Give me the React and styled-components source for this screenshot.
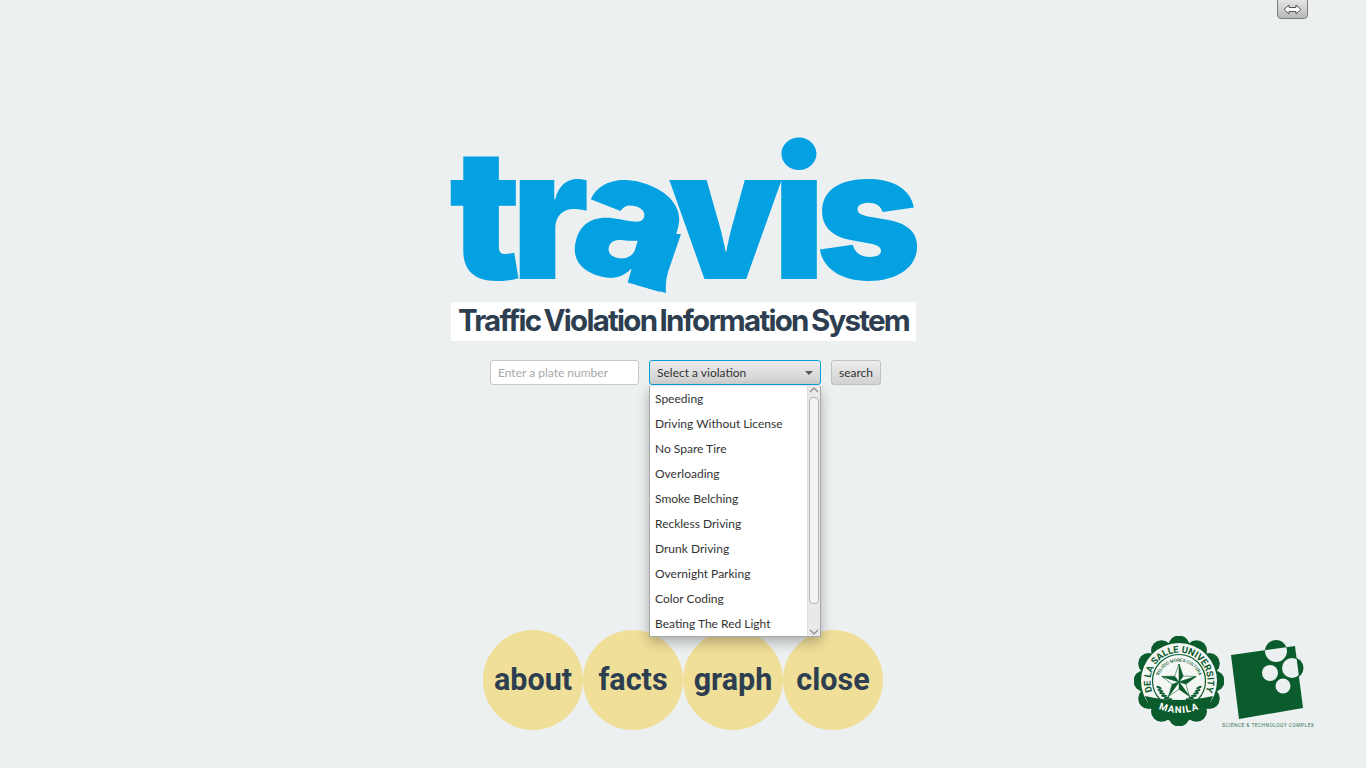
import React from "react";
import styled, { createGlobalStyle } from "styled-components";

const GlobalStyle = createGlobalStyle`
  html, body {
    margin: 0;
    padding: 0;
    height: 100%;
    overflow: hidden;
    background: #ecf0f1;
  }
`;

const Page = styled.div`
  width: 1366px;
  height: 768px;
  background: #ecf0f1;
  display: flex;
  flex-direction: column;
`;

const TopBar = styled.div`
  height: 20px;
  display: flex;
  justify-content: flex-end;
  padding-right: 58px;
`;

const ToggleButton = styled.button`
  width: 31px;
  height: 20px;
  margin-top: -1px;
  padding: 0;
  border: 1px solid #7d7d7d;
  border-radius: 0 0 4px 4px;
  background: linear-gradient(#e6e6e6, #b8b8b8);
  display: flex;
  align-items: center;
  justify-content: center;
`;

const Main = styled.main`
  flex: 1;
  display: flex;
  flex-direction: column;
  align-items: center;
  padding-top: 120px;
`;

const Brand = styled.div`
  width: 465px;
  margin-right: -1px;
  display: flex;
  flex-direction: column;
`;

const Logo = styled.h1`
  position: relative;
  height: 162px;
  margin: 0 0 0 -2px;
  color: #03a0e2;
  font: 900 181px/147px Inter, "Liberation Sans", sans-serif;
  letter-spacing: -10.5px;
  white-space: nowrap;
`;

const TiltedLetter = styled.span`
  display: inline-block;
  transform: rotate(16deg) translate(2px, 1px);
  margin-right: -8px;
`;

const Tail = styled.svg`
  position: absolute;
  left: 182px;
  top: 70px;
`;

const Tagline = styled.div`
  height: 39px;
  background: #ffffff;
  color: #2c3e50;
  font: 700 29.5px/36px Inter, "Liberation Sans", sans-serif;
  letter-spacing: -1.75px;
  word-spacing: -2px;
  text-align: center;
  white-space: nowrap;
`;

const SearchRow = styled.form`
  display: flex;
  align-items: flex-start;
  gap: 10px;
  margin: 19px 0 0 5px;
  font: 12px/25px Lato, "Open Sans", sans-serif;
`;

const PlateInput = styled.input`
  box-sizing: border-box;
  width: 149px;
  height: 25px;
  padding: 0 7px;
  border: 1px solid #c8c8c8;
  border-radius: 3px;
  background: #ffffff;
  font: inherit;
  outline: none;

  &::placeholder {
    color: #a9a9a9;
    opacity: 1;
  }
`;

const SelectWrap = styled.div`
  position: relative;
  width: 172px;
  z-index: 2;
`;

const SelectBox = styled.div`
  box-sizing: border-box;
  height: 25px;
  padding: 0 7px;
  border: 1px solid #0a9fd8;
  border-radius: 3px;
  background: linear-gradient(#ececec, #cfcfcf);
  color: #333333;
  line-height: 23px;
  display: flex;
  align-items: center;
  justify-content: space-between;
`;

const Caret = styled.span`
  width: 0;
  height: 0;
  border-left: 4px solid transparent;
  border-right: 4px solid transparent;
  border-top: 4px solid #555555;
`;

const SearchButton = styled.button`
  box-sizing: border-box;
  width: 50px;
  height: 25px;
  padding: 0;
  border: 1px solid #c0c0c0;
  border-radius: 3px;
  background: linear-gradient(#ececec, #d2d2d2);
  color: #333333;
  font: inherit;
  line-height: 23px;
`;

const Popup = styled.div`
  position: absolute;
  top: 26px;
  left: 0;
  box-sizing: border-box;
  width: 172px;
  height: 251px;
  display: flex;
  background: #ffffff;
  border: 1px solid #a8a8a8;
  border-top: none;
  box-shadow: 0 5px 12px rgba(0, 0, 0, 0.28);
`;

const OptionList = styled.ul`
  flex: 1;
  margin: 0;
  padding: 0;
  list-style: none;
`;

const Option = styled.li`
  height: 25px;
  padding-left: 5px;
  color: #333333;
  line-height: 25px;
  white-space: nowrap;
`;

const ScrollTrack = styled.div`
  box-sizing: border-box;
  flex: none;
  width: 13px;
  padding-left: 1px;
  background: #e9e9e9;
  border-left: 1px solid #dcdcdc;
  display: flex;
  flex-direction: column;
`;

const ScrollArrow = styled.svg`
  flex: none;
`;

const ScrollThumb = styled.div`
  box-sizing: border-box;
  width: 10px;
  height: 207px;
  margin-top: 3px;
  border: 1px solid #b5b5b5;
  border-radius: 4px;
  background: #f4f4f4;
`;

const ScrollSpacer = styled.div`
  flex: 1;
`;

const Footer = styled.div`
  display: grid;
  grid-template-columns: 1fr auto 1fr;
  align-items: end;
  width: 100%;
  margin-top: auto;
  padding-bottom: 38px;
`;

const CircleNav = styled.nav`
  grid-column: 2;
  display: flex;
`;

const CircleButton = styled.div`
  width: 100px;
  height: 100px;
  border-radius: 50%;
  background: #f0df99;
  color: #2c3e50;
  font: 700 30.5px/100px Roboto, "Liberation Sans", sans-serif;
  text-align: center;
`;

const Seals = styled.div`
  grid-column: 3;
  justify-self: end;
  display: flex;
  align-items: flex-start;
  margin-right: 52px;
`;

const SealSvg = styled.svg`
  display: block;
  margin: -4px -3px 0 0;
`;

const ComplexSvg = styled.svg`
  display: block;
`;

const violations = [
  "Speeding",
  "Driving Without License",
  "No Spare Tire",
  "Overloading",
  "Smoke Belching",
  "Reckless Driving",
  "Drunk Driving",
  "Overnight Parking",
  "Color Coding",
  "Beating The Red Light",
];

const GREEN = "#0b5c2d";
const PAPER = "#ecf0f1";

// star with every other facet left white
const star = () => {
  const outer = 18;
  const inner = 7.2;
  const pts = Array.from({ length: 10 }).map((_, i) => {
    const a = ((i * 36 - 90) * Math.PI) / 180;
    const r = i % 2 ? inner : outer;
    return [45 + r * Math.cos(a), 46 + r * Math.sin(a)];
  });
  return pts.map((p, i) => {
    const next = pts[(i + 1) % 10];
    return {
      key: i,
      d: `M45 46 L${p[0]} ${p[1]} L${next[0]} ${next[1]} Z`,
      fill: i % 2 ? "#ffffff" : GREEN,
    };
  });
};

const laurels = [-1, 1].flatMap((side) =>
  [0, 1, 2, 3, 4, 5].map((i) => {
    const deg = 108 + i * 9;
    const angle = (deg * Math.PI) / 180;
    const x = 45 + side * 21 * Math.sin(angle);
    const y = 45 - 21 * Math.cos(angle);
    return { key: `${side}-${i}`, x, y, rot: side * (deg + 45) };
  })
);

const Seal = () => (
  <SealSvg width="90" height="90" viewBox="0 0 90 90">
    <defs>
      <path id="sealTop" d="M24.8 65.2 A28.5 28.5 0 1 1 65.2 65.2" />
      <path id="sealBottom" d="M20 71 Q45 83 70 71" />
      <path id="sealInner" d="M25 55 A21.5 21.5 0 1 1 65 55" />
    </defs>
    {Array.from({ length: 12 }).map((_, i) => {
      const a = (i / 12) * Math.PI * 2;
      return (
        <circle key={i} cx={45 + 35 * Math.cos(a)} cy={45 + 35 * Math.sin(a)} r="10.5" fill={GREEN} />
      );
    })}
    <circle cx="45" cy="45" r="39" fill={GREEN} />
    <circle cx="45" cy="45" r="38" fill="#f4f6f4" />
    <circle cx="45" cy="45" r="26.5" fill="none" stroke={GREEN} strokeWidth="1.2" />
    <text fill={GREEN} fontFamily="Roboto, sans-serif" fontWeight="700" fontSize="9.4">
      <textPath href="#sealTop" startOffset="50%" textAnchor="middle">DE LA SALLE UNIVERSITY</textPath>
    </text>
    <path d="M11 60 Q45 68 79 60 L74 72 Q60 86 45 86 Q30 86 16 72 Z" fill={GREEN} />
    <text fill="#ffffff" fontFamily="Roboto, sans-serif" fontWeight="700" fontSize="9.6" letterSpacing="1">
      <textPath href="#sealBottom" startOffset="50%" textAnchor="middle">MANILA</textPath>
    </text>
    <text fill={GREEN} fontFamily="Roboto, sans-serif" fontWeight="500" fontSize="4.4">
      <textPath href="#sealInner" startOffset="50%" textAnchor="middle">RELIGIO MORES CULTURA</textPath>
    </text>
    {star().map((facet) => (
      <path key={facet.key} d={facet.d} fill={facet.fill} stroke={GREEN} strokeWidth="0.6" />
    ))}
    {laurels.map((leaf) => (
      <ellipse
        key={leaf.key}
        cx={leaf.x}
        cy={leaf.y}
        rx="3"
        ry="1.2"
        fill={GREEN}
        transform={`rotate(${leaf.rot} ${leaf.x} ${leaf.y})`}
      />
    ))}
  </SealSvg>
);

const SQUARE = "10,15 74,6 82,68 18,79";

const Complex = () => (
  <ComplexSvg width="93" height="90" viewBox="0 0 93 90">
    <defs>
      <clipPath id="squareClip">
        <polygon points={SQUARE} />
      </clipPath>
    </defs>
    <circle cx="55" cy="11" r="11" fill={GREEN} />
    <circle cx="72" cy="28" r="10.5" fill={GREEN} />
    <polygon points={SQUARE} fill={GREEN} />
    <g clipPath="url(#squareClip)" fill={PAPER}>
      <circle cx="55" cy="11" r="11" />
      <circle cx="71" cy="28" r="10" />
    </g>
    <circle cx="49" cy="33" r="8" fill={PAPER} />
    <circle cx="62" cy="46" r="7.5" fill={PAPER} />
    <text x="1" y="87" fill="#3c7a58" fontFamily="Roboto, sans-serif" fontSize="5" textLength="92">
      SCIENCE &amp; TECHNOLOGY COMPLEX
    </text>
  </ComplexSvg>
);

export default function App() {
  return (
    <Page>
      <GlobalStyle />
      <TopBar>
        <ToggleButton type="button" aria-label="toggle">
          <svg width="19" height="11" viewBox="0 0 19 11">
            <path
              d="M1 5.5 L6 1 V3.5 H13 V1 L18 5.5 L13 10 V7.5 H6 V10 Z"
              fill="#ffffff"
              stroke="#555555"
              strokeWidth="1"
            />
          </svg>
        </ToggleButton>
      </TopBar>
      <Main>
        <Brand>
          <Logo>
            tr<TiltedLetter>a</TiltedLetter>vis
            <Tail width="60" height="90" viewBox="0 0 60 90">
              <path d="M2 66 L6 75 L35 83 Q34 72 37 62 L50 24 L16 24 L14 52 Z" fill="#03a0e2" />
            </Tail>
          </Logo>
          <Tagline>Traffic Violation Information System</Tagline>
        </Brand>
        <SearchRow onSubmit={(e) => e.preventDefault()}>
          <PlateInput placeholder="Enter a plate number" />
          <SelectWrap>
            <SelectBox>
              Select a violation
              <Caret />
            </SelectBox>
            <Popup>
              <OptionList>
                {violations.map((v) => (
                  <Option key={v}>{v}</Option>
                ))}
              </OptionList>
              <ScrollTrack>
                <ScrollArrow width="10" height="8" viewBox="0 0 10 8">
                  <path d="M1 6 L5 2 L9 6" fill="none" stroke="#8a8a8a" strokeWidth="1.2" />
                </ScrollArrow>
                <ScrollThumb />
                <ScrollSpacer />
                <ScrollArrow width="10" height="8" viewBox="0 0 10 8">
                  <path d="M1 2 L5 6 L9 2" fill="none" stroke="#8a8a8a" strokeWidth="1.2" />
                </ScrollArrow>
              </ScrollTrack>
            </Popup>
          </SelectWrap>
          <SearchButton type="button">search</SearchButton>
        </SearchRow>
        <Footer>
          <CircleNav>
            <CircleButton>about</CircleButton>
            <CircleButton>facts</CircleButton>
            <CircleButton>graph</CircleButton>
            <CircleButton>close</CircleButton>
          </CircleNav>
          <Seals>
            <Seal />
            <Complex />
          </Seals>
        </Footer>
      </Main>
    </Page>
  );
}
